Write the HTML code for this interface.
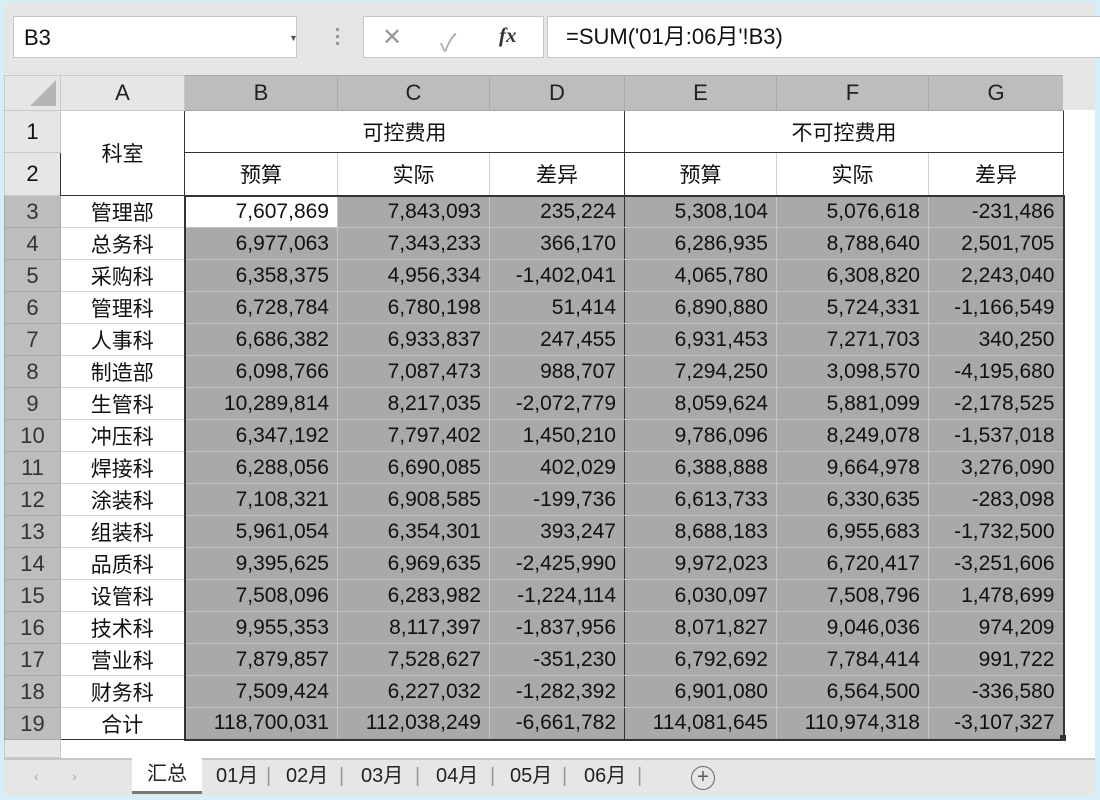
<!DOCTYPE html>
<html><head><meta charset="utf-8"><style>
*{box-sizing:border-box;margin:0;padding:0}
body{width:1100px;height:800px;background:#d6eef8;position:relative;overflow:hidden;font-family:"Liberation Sans","Noto Sans CJK SC",sans-serif;color:#111}
#app{position:absolute;left:4px;top:3px;width:1091px;height:793px;background:#fff}
#tb{position:absolute;left:0;top:0;width:1091px;height:72px;background:#e6e6e6}
.box{position:absolute;background:#fff;border:1px solid #c6c6c6}
table{position:absolute;left:0;top:72px;border-collapse:collapse;table-layout:fixed}
td{font-size:21px;padding:0 8px;border:1px solid #d0d0d0;white-space:nowrap;overflow:hidden}
td.h{background:#e6e6e6;text-align:center;color:#222;border-color:#c8c8c8;font-size:22px}
td.hs{background:#bdbdbd;text-align:center;color:#222;border-color:#a8a8a8;font-size:22px}
td.rs{background:#bdbdbd;text-align:center;color:#333;border-color:#a8a8a8;font-size:22px;padding:0}
td.rh{background:#e6e6e6;text-align:center;border-color:#c8c8c8;font-size:22px;padding:0}
td.a{text-align:center;background:#fff;border-left:1px solid #333;border-right:1px solid #333;border-color:#d0d0d0 #333 #d0d0d0 #333}
td.n{text-align:right;background:#a9a9a9;border-color:#c4c4c4}
td.w{background:#fff}
td.c{text-align:center;background:#fff}
#tabs{position:absolute;left:0;top:755px;width:1091px;height:38px;background:#e6e6e6;border-top:2px solid #c6c6c6}
.t{position:absolute;top:0;height:34px;line-height:32px;font-size:20px;color:#222}
</style></head><body>
<div id="app">
<div id="tb">
 <div class="box" style="left:9px;top:13px;width:284px;height:42px"><span style="position:absolute;left:10px;top:8px;font-size:22px">B3</span><span style="position:absolute;left:275px;top:16px;font-size:9px;color:#555">▼</span></div>
 <div style="position:absolute;left:332px;top:25px;width:3px;height:3px;background:#999;box-shadow:0 7px #999,0 14px #999"></div>
 <div class="box" style="left:359px;top:13px;width:181px;height:42px">
  <span style="position:absolute;left:18px;top:6px;font-size:24px;color:#999">✕</span>
  <span style="position:absolute;left:76px;top:6px;font-size:24px;color:#aaa">✓</span>
  <span style="position:absolute;left:135px;top:6px;font-size:21px;font-style:italic;font-family:'Liberation Serif',serif;font-weight:bold;color:#333">fx</span>
 </div>
 <div class="box" style="left:543px;top:13px;width:560px;height:42px"><span style="position:absolute;left:18px;top:7px;font-size:22px;line-height:26px">=SUM('01月:06月'!B3)</span></div>
</div>
<table>
<colgroup><col style="width:56px"><col style="width:124px"><col style="width:153px"><col style="width:152px"><col style="width:135px"><col style="width:152px"><col style="width:152px"><col style="width:135px"></colgroup>
<tr style="height:35px"><td class="h" style="position:relative"><div style="position:absolute;right:4px;bottom:4px;width:0;height:0;border-left:26px solid transparent;border-bottom:26px solid #b5b5b5"></div></td><td class="h">A</td><td class="hs">B</td><td class="hs">C</td><td class="hs">D</td><td class="hs">E</td><td class="hs">F</td><td class="hs">G</td></tr>
<tr style="height:42px"><td class="rh">1</td><td class="c" rowspan="2" style="border:1px solid #333">科室</td><td class="c" colspan="3" style="border:1px solid #333">可控费用</td><td class="c" colspan="3" style="border:1px solid #333">不可控费用</td></tr>
<tr style="height:43px"><td class="rh">2</td><td class="c" style="border-bottom:2px solid #333;border-left:1px solid #333">预算</td><td class="c" style="border-bottom:2px solid #333">实际</td><td class="c" style="border-bottom:2px solid #333;border-right:1px solid #333">差异</td><td class="c" style="border-bottom:2px solid #333">预算</td><td class="c" style="border-bottom:2px solid #333">实际</td><td class="c" style="border-bottom:2px solid #333;border-right:1px solid #333">差异</td></tr>
<tr style="height:32px"><td class="rs">3</td><td class="a">管理部</td><td class="n w" style="border-left:2px solid #333">7,607,869</td><td class="n">7,843,093</td><td class="n" style="border-right:1px solid #333">235,224</td><td class="n">5,308,104</td><td class="n">5,076,618</td><td class="n" style="border-right:2px solid #333">-231,486</td></tr>
<tr style="height:32px"><td class="rs">4</td><td class="a">总务科</td><td class="n" style="border-left:2px solid #333">6,977,063</td><td class="n">7,343,233</td><td class="n" style="border-right:1px solid #333">366,170</td><td class="n">6,286,935</td><td class="n">8,788,640</td><td class="n" style="border-right:2px solid #333">2,501,705</td></tr>
<tr style="height:32px"><td class="rs">5</td><td class="a">采购科</td><td class="n" style="border-left:2px solid #333">6,358,375</td><td class="n">4,956,334</td><td class="n" style="border-right:1px solid #333">-1,402,041</td><td class="n">4,065,780</td><td class="n">6,308,820</td><td class="n" style="border-right:2px solid #333">2,243,040</td></tr>
<tr style="height:32px"><td class="rs">6</td><td class="a">管理科</td><td class="n" style="border-left:2px solid #333">6,728,784</td><td class="n">6,780,198</td><td class="n" style="border-right:1px solid #333">51,414</td><td class="n">6,890,880</td><td class="n">5,724,331</td><td class="n" style="border-right:2px solid #333">-1,166,549</td></tr>
<tr style="height:32px"><td class="rs">7</td><td class="a">人事科</td><td class="n" style="border-left:2px solid #333">6,686,382</td><td class="n">6,933,837</td><td class="n" style="border-right:1px solid #333">247,455</td><td class="n">6,931,453</td><td class="n">7,271,703</td><td class="n" style="border-right:2px solid #333">340,250</td></tr>
<tr style="height:32px"><td class="rs">8</td><td class="a">制造部</td><td class="n" style="border-left:2px solid #333">6,098,766</td><td class="n">7,087,473</td><td class="n" style="border-right:1px solid #333">988,707</td><td class="n">7,294,250</td><td class="n">3,098,570</td><td class="n" style="border-right:2px solid #333">-4,195,680</td></tr>
<tr style="height:32px"><td class="rs">9</td><td class="a">生管科</td><td class="n" style="border-left:2px solid #333">10,289,814</td><td class="n">8,217,035</td><td class="n" style="border-right:1px solid #333">-2,072,779</td><td class="n">8,059,624</td><td class="n">5,881,099</td><td class="n" style="border-right:2px solid #333">-2,178,525</td></tr>
<tr style="height:32px"><td class="rs">10</td><td class="a">冲压科</td><td class="n" style="border-left:2px solid #333">6,347,192</td><td class="n">7,797,402</td><td class="n" style="border-right:1px solid #333">1,450,210</td><td class="n">9,786,096</td><td class="n">8,249,078</td><td class="n" style="border-right:2px solid #333">-1,537,018</td></tr>
<tr style="height:32px"><td class="rs">11</td><td class="a">焊接科</td><td class="n" style="border-left:2px solid #333">6,288,056</td><td class="n">6,690,085</td><td class="n" style="border-right:1px solid #333">402,029</td><td class="n">6,388,888</td><td class="n">9,664,978</td><td class="n" style="border-right:2px solid #333">3,276,090</td></tr>
<tr style="height:32px"><td class="rs">12</td><td class="a">涂装科</td><td class="n" style="border-left:2px solid #333">7,108,321</td><td class="n">6,908,585</td><td class="n" style="border-right:1px solid #333">-199,736</td><td class="n">6,613,733</td><td class="n">6,330,635</td><td class="n" style="border-right:2px solid #333">-283,098</td></tr>
<tr style="height:32px"><td class="rs">13</td><td class="a">组装科</td><td class="n" style="border-left:2px solid #333">5,961,054</td><td class="n">6,354,301</td><td class="n" style="border-right:1px solid #333">393,247</td><td class="n">8,688,183</td><td class="n">6,955,683</td><td class="n" style="border-right:2px solid #333">-1,732,500</td></tr>
<tr style="height:32px"><td class="rs">14</td><td class="a">品质科</td><td class="n" style="border-left:2px solid #333">9,395,625</td><td class="n">6,969,635</td><td class="n" style="border-right:1px solid #333">-2,425,990</td><td class="n">9,972,023</td><td class="n">6,720,417</td><td class="n" style="border-right:2px solid #333">-3,251,606</td></tr>
<tr style="height:32px"><td class="rs">15</td><td class="a">设管科</td><td class="n" style="border-left:2px solid #333">7,508,096</td><td class="n">6,283,982</td><td class="n" style="border-right:1px solid #333">-1,224,114</td><td class="n">6,030,097</td><td class="n">7,508,796</td><td class="n" style="border-right:2px solid #333">1,478,699</td></tr>
<tr style="height:32px"><td class="rs">16</td><td class="a">技术科</td><td class="n" style="border-left:2px solid #333">9,955,353</td><td class="n">8,117,397</td><td class="n" style="border-right:1px solid #333">-1,837,956</td><td class="n">8,071,827</td><td class="n">9,046,036</td><td class="n" style="border-right:2px solid #333">974,209</td></tr>
<tr style="height:32px"><td class="rs">17</td><td class="a">营业科</td><td class="n" style="border-left:2px solid #333">7,879,857</td><td class="n">7,528,627</td><td class="n" style="border-right:1px solid #333">-351,230</td><td class="n">6,792,692</td><td class="n">7,784,414</td><td class="n" style="border-right:2px solid #333">991,722</td></tr>
<tr style="height:32px"><td class="rs">18</td><td class="a">财务科</td><td class="n" style="border-left:2px solid #333">7,509,424</td><td class="n">6,227,032</td><td class="n" style="border-right:1px solid #333">-1,282,392</td><td class="n">6,901,080</td><td class="n">6,564,500</td><td class="n" style="border-right:2px solid #333">-336,580</td></tr>
<tr style="height:32px"><td class="rs">19</td><td class="a" style="border-top:1px solid #333;border-bottom:1px solid #333">合计</td><td class="n" style="border-left:2px solid #333;border-top:1px solid #333;border-bottom:2px solid #333">118,700,031</td><td class="n" style="border-top:1px solid #333;border-bottom:2px solid #333">112,038,249</td><td class="n" style="border-right:1px solid #333;border-top:1px solid #333;border-bottom:2px solid #333">-6,661,782</td><td class="n" style="border-top:1px solid #333;border-bottom:2px solid #333">114,081,645</td><td class="n" style="border-top:1px solid #333;border-bottom:2px solid #333">110,974,318</td><td class="n" style="border-right:2px solid #333;border-top:1px solid #333;border-bottom:2px solid #333">-3,107,327</td></tr>
<tr style="height:18px"><td class="rh"></td><td colspan="7" style="border:none;background:#fff"></td></tr>
</table>
<div style="position:absolute;left:1056px;top:732px;width:6px;height:6px;background:#333"></div>
<div style="position:absolute;left:1059px;top:72px;width:32px;height:35px;background:#e6e6e6"></div>
<div id="tabs">
 <span class="t" style="left:30px;color:#aaa;font-size:14px">‹</span><span class="t" style="left:68px;color:#aaa;font-size:14px">›</span>
 <div class="t" style="left:128px;top:-2px;width:70px;height:36px;background:#fff;text-align:center;border-bottom:3px solid #777">汇总</div>
 <span class="t" style="left:212px">01月</span><span class="t" style="left:262px;color:#999">|</span>
 <span class="t" style="left:282px">02月</span><span class="t" style="left:335px;color:#999">|</span>
 <span class="t" style="left:357px">03月</span><span class="t" style="left:411px;color:#999">|</span>
 <span class="t" style="left:432px">04月</span><span class="t" style="left:486px;color:#999">|</span>
 <span class="t" style="left:506px">05月</span><span class="t" style="left:558px;color:#999">|</span>
 <span class="t" style="left:580px">06月</span><span class="t" style="left:633px;color:#999">|</span>
 <div style="position:absolute;left:687px;top:6px;width:24px;height:24px;border:1.5px solid #666;border-radius:50%;text-align:center;line-height:20px;font-size:20px;color:#555">+</div>
</div>
</div>
</body></html>
